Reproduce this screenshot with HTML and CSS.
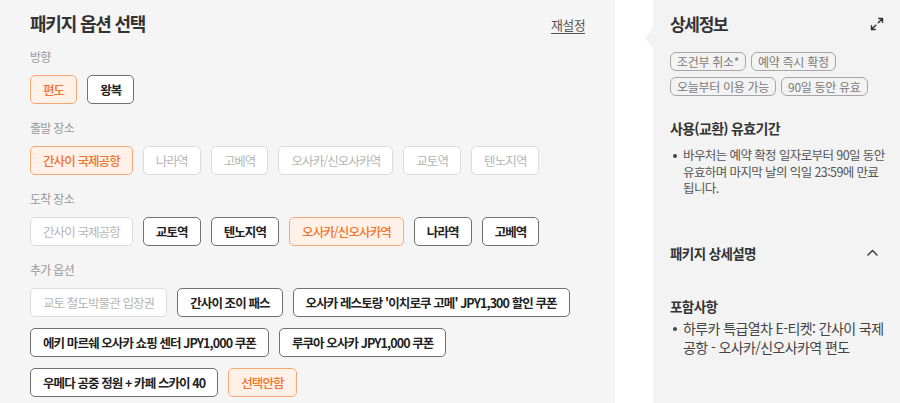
FILE: index.html
```html
<!DOCTYPE html>
<html lang="ko">
<head>
    <meta charset="UTF-8">
    <meta name="viewport" content="width=device-width, initial-scale=1.0">
    <title>패키지 옵션 선택</title>
    <link rel="stylesheet" href="styles.css">
</head>
<body>

    <div class="page">
        <!-- Left: package options -->
        <section class="options">
            <div class="options-head">
                <h2>패키지 옵션 선택</h2>
                <a href="#" class="reset">재설정</a>
            </div>

            <div class="group">
                <p class="group-label">방향</p>
                <div class="chips">
                    <button class="chip selected">편도</button>
                    <button class="chip">왕복</button>
                </div>
            </div>

            <div class="group">
                <p class="group-label">출발 장소</p>
                <div class="chips">
                    <button class="chip selected">간사이 국제공항</button>
                    <button class="chip off">나라역</button>
                    <button class="chip off">고베역</button>
                    <button class="chip off">오사카/신오사카역</button>
                    <button class="chip off">교토역</button>
                    <button class="chip off">텐노지역</button>
                </div>
            </div>

            <div class="group">
                <p class="group-label">도착 장소</p>
                <div class="chips">
                    <button class="chip off">간사이 국제공항</button>
                    <button class="chip">교토역</button>
                    <button class="chip">텐노지역</button>
                    <button class="chip selected">오사카/신오사카역</button>
                    <button class="chip">나라역</button>
                    <button class="chip">고베역</button>
                </div>
            </div>

            <div class="group">
                <p class="group-label">추가 옵션</p>
                <div class="chips">
                    <button class="chip off">교토 철도박물관 입장권</button>
                    <button class="chip">간사이 조이 패스</button>
                    <button class="chip">오사카 레스토랑 '이치로쿠 고메' JPY1,300 할인 쿠폰</button>
                    <button class="chip">에키 마르쉐 오사카 쇼핑 센터 JPY1,000 쿠폰</button>
                    <button class="chip">루쿠아 오사카 JPY1,000 쿠폰</button>
                    <button class="chip">우메다 공중 정원 + 카페 스카이 40</button>
                    <button class="chip selected">선택안함</button>
                </div>
            </div>
        </section>

        <!-- Right: details -->
        <aside class="details">
            <div class="details-head">
                <h3>상세정보</h3>
                <svg class="expand" width="14" height="14" viewBox="0 0 14 14" fill="none" stroke="#333" stroke-width="1.5" stroke-linecap="round" stroke-linejoin="round">
                    <path d="M8.3 5.7 L12.5 1.5 M8.8 1.5 H12.5 V5.2"/>
                    <path d="M5.7 8.3 L1.5 12.5 M1.5 8.8 V12.5 H5.2"/>
                </svg>
            </div>

            <div class="tags">
                <span class="tag">조건부 취소*</span>
                <span class="tag">예약 즉시 확정</span>
                <span class="tag">오늘부터 이용 가능</span>
                <span class="tag">90일 동안 유효</span>
            </div>

            <h4 class="sub-title">사용(교환) 유효기간</h4>
            <ul class="bullets small">
                <li>바우처는 예약 확정 일자로부터 90일 동안 유효하며 마지막 날의 익일 23:59에 만료됩니다.</li>
            </ul>

            <div class="collapse-head">
                <h4>패키지 상세설명</h4>
                <svg width="11" height="7" viewBox="0 0 11 7" fill="none" stroke="#333" stroke-width="1.4" stroke-linecap="round" stroke-linejoin="round">
                    <polyline points="1,6 5.5,1.5 10,6"/>
                </svg>
            </div>

            <h4 class="sub-title included">포함사항</h4>
            <ul class="bullets">
                <li>하루카 특급열차 E-티켓: 간사이 국제공항 - 오사카/신오사카역 편도</li>
            </ul>
        </aside>
    </div>

</body>
</html>
```

FILE: styles.css
```css
/* General styles */
* {
    box-sizing: border-box;
}

body {
    margin: 0;
    padding: 0;
    background: #fff;
    color: #222;
    font-family: 'Noto Sans CJK KR', 'Noto Sans', sans-serif;
    overflow: hidden;
}

.page {
    display: flex;
    height: 403px;
    gap: 38px;
}

/* Options panel */
.options {
    width: 615px;
    flex-shrink: 0;
    background: #f5f5f5;
    padding: 10px 30px 0 30px;
    overflow: hidden;
}

.options-head {
    display: flex;
    justify-content: space-between;
    align-items: center;
    margin-bottom: 13px;
}

.options-head h2 {
    margin: 0;
    font-size: 18px;
    line-height: 26px;
    font-weight: 700;
    letter-spacing: -1.2px;
    color: #333;
}

.reset {
    font-size: 13px;
    letter-spacing: -0.6px;
    color: #555;
    text-decoration: underline;
    text-underline-offset: 3px;
    margin-top: 3px;
}

.group {
    margin-bottom: 16px;
}

.group-label {
    margin: 0 0 10px;
    font-size: 12px;
    line-height: 16px;
    letter-spacing: -0.7px;
    color: #999;
}

.chips {
    display: flex;
    flex-wrap: wrap;
    gap: 11px 10px;
}

/* Buttons */
.chip {
    height: 29px;
    padding: 0 12px;
    font-family: inherit;
    font-size: 12.5px;
    font-weight: 700;
    letter-spacing: -0.9px;
    color: #222;
    background: #fff;
    border: 1px solid #707070;
    border-radius: 5px;
    cursor: pointer;
}

.chip.off {
    color: #b5b5b5;
    font-weight: 400;
    border-color: #dcdcdc;
}

.chip.selected {
    color: #f2732b;
    font-weight: 500;
    background: #fff1e8;
    border-color: #f6a874;
}

/* Details panel */
.details {
    flex: 1;
    position: relative;
    background: #f3f3f3;
    padding: 11px 14px 0 17px;
}

.details::before {
    content: "";
    position: absolute;
    left: -8px;
    top: 28px;
    border-top: 10px solid transparent;
    border-bottom: 10px solid transparent;
    border-right: 8px solid #f3f3f3;
}

.details-head {
    display: flex;
    justify-content: space-between;
    align-items: center;
    margin-bottom: 15px;
    padding-right: 2px;
}

.details-head h3 {
    margin: 0;
    font-size: 17px;
    line-height: 26px;
    font-weight: 700;
    letter-spacing: -1.3px;
    color: #333;
}

.tags {
    display: flex;
    flex-wrap: wrap;
    gap: 6px 5px;
    margin-bottom: 22px;
}

.tag {
    height: 19px;
    line-height: 17px;
    padding: 0 6px;
    font-size: 12px;
    letter-spacing: -0.3px;
    color: #7a7a7a;
    border: 1px solid #a5a5a5;
    border-radius: 6px;
}

.sub-title {
    margin: 0 0 9px;
    font-size: 14px;
    line-height: 20px;
    font-weight: 700;
    letter-spacing: -0.7px;
    color: #333;
}

.bullets {
    list-style: none;
    margin: 0;
    padding: 0 0 0 13px;
    font-size: 14px;
    line-height: 19px;
    letter-spacing: -0.6px;
    color: #444;
}

.bullets li {
    position: relative;
}

.bullets li::before {
    content: "";
    position: absolute;
    left: -10px;
    top: 8px;
    width: 4px;
    height: 4px;
    border-radius: 50%;
    background: #444;
}

.bullets.small {
    font-size: 12.5px;
    line-height: 16.5px;
    letter-spacing: -0.6px;
    color: #555;
}

.bullets.small li::before {
    top: 6.5px;
}

.collapse-head {
    display: flex;
    justify-content: space-between;
    align-items: center;
    margin-top: 46px;
    padding-right: 8px;
}

.collapse-head h4 {
    margin: 0;
    font-size: 13.5px;
    line-height: 20px;
    font-weight: 700;
    letter-spacing: -0.6px;
    color: #333;
}

.sub-title.included {
    font-size: 13.5px;
    letter-spacing: -0.6px;
    margin-top: 33px;
    margin-bottom: 3px;
}
```
